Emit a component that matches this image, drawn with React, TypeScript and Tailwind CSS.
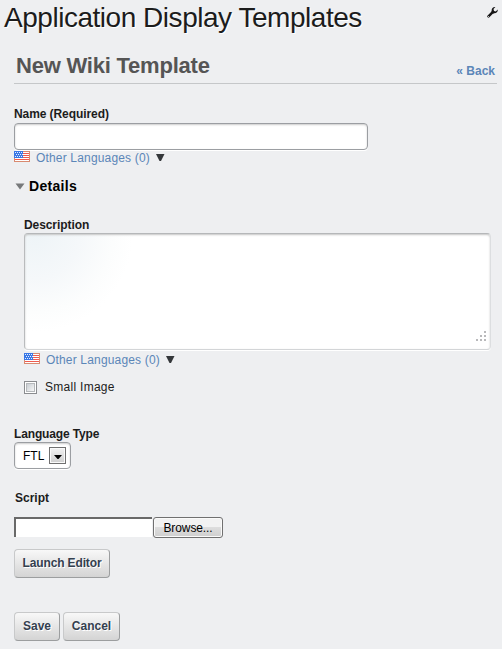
import React from "react";

function Flag() {
  return (
    <svg width="16" height="11" viewBox="0 0 16 11" shapeRendering="crispEdges" className="block shrink-0">
      <rect width="16" height="11" fill="#d98a70" />
      <rect x="1" y="1" width="14" height="9" fill="#fff" />
      {[2, 4, 6, 8].map((y) => (
        <rect key={y} x="1" y={y} width="14" height="1" fill="#ee5b50" />
      ))}
      <rect width="9" height="7" fill="#3a78e6" />
      {[1, 3, 5].map((y) =>
        [1, 3, 5, 7].map((x) => (
          <rect key={`${x}-${y}`} x={y === 3 ? x + 1 : x} y={y} width="1" height="1" fill="#e6f0ff" />
        )),
      )}
    </svg>
  );
}

function OtherLanguages() {
  return (
    <div className="flex h-[15px] items-start">
      <Flag />
      <span className="ml-[6px] w-[120px] text-[12px] leading-[15px] tracking-[0.17px] text-[#5b86b8]">
        Other Languages (0)
      </span>
      <svg width="9" height="8" viewBox="0 0 9 8" className="mt-[3px] block">
        <path d="M0 0H8.5L5 7H3.5Z" fill="#34373a" />
      </svg>
    </div>
  );
}

function Button({ className, children }: { className: string; children: React.ReactNode }) {
  return (
    <button
      className={`h-[29px] rounded-[4px] border border-t-[#c8c9ca] border-r-[#9c9e9f] border-b-[#9c9e9f] border-l-[#c8c9ca] bg-linear-to-b from-[#f8f8f8] to-[#d4d4d4] text-[12px] leading-[27px] font-bold text-[#34404f] [text-shadow:1px_1px_#fff] ${className}`}
    >
      {children}
    </button>
  );
}

export default function App() {
  return (
    <main className="h-[649px] w-[502px] overflow-hidden bg-[#eeeff1] font-['Liberation_Sans',Arial,sans-serif] text-[12px] text-[#1c1c1c]">
      <header className="flex h-[52px] justify-between pl-1">
        <h1 className="pt-[2px] text-[28px] leading-[32px] tracking-[-0.47px] whitespace-nowrap [text-shadow:1px_1px_#fff]">
          Application Display Templates
        </h1>
        <svg width="11" height="11" viewBox="0 0 11 11" className="mt-[7px] mr-[4px] block">
          <path d="M1.5 9.3L5.7 5.2" stroke="#161616" strokeWidth="2.5" strokeLinecap="round" />
          <path d="M8.4 0C6.1-0.2 4.3 1.7 4.7 3.8L4.4 5.1L6 6.7L7.2 6.3C9.3 6.5 10.9 4.7 10.8 2.5L8.7 4.4L7 3.9L6.5 2.1Z" fill="#161616" />
          <rect x="1" y="9" width="1" height="1" fill="#bbb" />
        </svg>
      </header>
      <div className="mr-[5px] ml-[14px] flex h-8 justify-between border-b border-[#c5c7c9] pr-[2px] pl-[2px]">
        <h2 className="text-[22px] leading-[27px] font-bold tracking-[-0.22px] text-[#555]">New Wiki Template</h2>
        <a className="pt-[11px] text-[12px] leading-[16px] font-bold text-[#5b86b8]">« Back</a>
      </div>

      <form className="pl-[14px]">
        <label className="block h-[39px] pt-[22px] leading-[16px] font-bold tracking-[-0.08px]">Name (Required)</label>
        <div className="h-[27px] w-[354px] rounded-[4px] border border-[#9b9ea2] bg-white shadow-[inset_0_1px_2px_#ccc,0_1px_#fff]" />
        <div className="pt-px">
          <OtherLanguages />
        </div>

        <div className="flex h-[51px] pt-[11px]">
          <svg width="10" height="7" viewBox="0 0 10 7" className="mt-[6px] ml-px block">
            <path d="M0.5 0.5H9.5L5 6.5Z" fill="#77797b" />
          </svg>
          <h3 className="ml-1 text-[14px] leading-[18px] font-bold tracking-[0.3px] text-black">Details</h3>
        </div>

        <div className="pl-[10px]">
          <label className="block h-[16px] leading-[16px] font-bold tracking-[-0.08px]">Description</label>
          <div className="flex h-[117px] w-[467px] items-end justify-end rounded-[4px] border border-t-[#b5b7b9] border-r-[#dcdee0] border-b-[#d3d5d7] border-l-[#b9bbbd] bg-white bg-[radial-gradient(circle_at_10px_0px,#eef4f7_0,#f5f8fa_45px,#fcfdfd_78px,#fff_98px)] pr-1 pb-[8px] shadow-[inset_0_1px_2px_#c5c5c5,0_1px_#fff]">
            <svg width="10" height="10" viewBox="0 0 10 10" fill="#b9b9bb" className="block">
              <path d="M8 0h2v2h-2zM4 4h2v2h-2zM8 4h2v2h-2zM0 8h2v2h-2zM4 8h2v2h-2zM8 8h2v2h-2z" />
            </svg>
          </div>
          <div className="pt-[3px]">
            <OtherLanguages />
          </div>
          <div className="flex h-[58px] pt-[12px]">
            <div className="mt-px h-[13px] w-[13px] border border-[#8b8d90] bg-white p-px">
              <div className="h-[9px] w-[9px] border border-[#b5b8bb] bg-linear-to-br from-[#c9ced3] to-[#f7f7f7]" />
            </div>
            <span className="ml-2 leading-[15px] tracking-[0.28px]">Small Image</span>
          </div>
        </div>

        <label className="block h-4 leading-4 font-bold tracking-[-0.14px]">Language Type</label>
        <div className="flex h-[27px] w-[57px] items-center rounded-[4px] border border-[#9b9ea2] bg-white pl-2 shadow-[inset_0_1px_2px_#ccc,0_1px_#fff]">
          <span className="w-[26px] text-black">FTL</span>
          <span className="flex h-[17px] w-[17px] items-center justify-center border border-[#707070] bg-linear-to-b from-[#f2f2f2] to-[#cfcfcf] shadow-[inset_0_0_0_1px_#fafafa]">
            <svg width="8" height="4" viewBox="0 0 8 4" className="mt-[2px] block">
              <path d="M0 0H8L4.5 4H3.5Z" fill="#000" />
            </svg>
          </span>
        </div>

        <label className="block h-[48px] pt-[21px] pl-px leading-[16px] font-bold">Script</label>
        <div className="flex h-[32px] gap-px">
          <div className="h-[20px] w-[138px] border-t-2 border-l-2 border-[#696969] bg-white" />
          <button className="h-[21px] w-[70px] rounded-[3px] border border-[#707070] bg-linear-to-b from-[#f2f2f2] from-45% via-[#dddddd] via-50% to-[#cfcfcf] text-[12px] leading-[20px] tracking-[-0.1px] text-black shadow-[inset_0_0_0_1px_#fafafa]">
            Browse...
          </button>
        </div>
        <Button className="block w-[96px] tracking-[-0.14px]">Launch Editor</Button>
        <div className="flex gap-[3px] pt-[34px]">
          <Button className="w-[46px]">Save</Button>
          <Button className="w-[57px]">Cancel</Button>
        </div>
      </form>
    </main>
  );
}
